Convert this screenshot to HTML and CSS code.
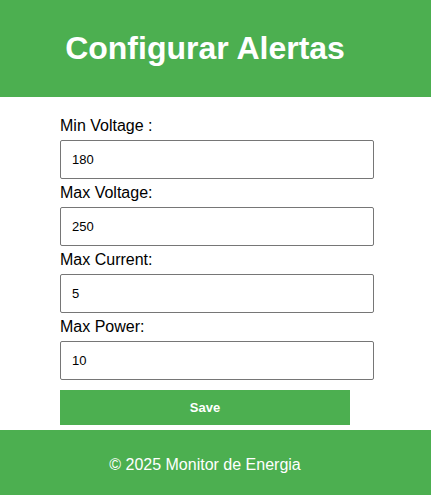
FILE: index.html
```html
<!DOCTYPE html>
<html lang="es">
<head>
<meta charset="utf-8">
<title>Configurar Alertas</title>
<link rel="stylesheet" href="styles.css">
</head>
<body>
<header class="header">
  <h1 class="title">Configurar Alertas</h1>
</header>
<main class="content">
  <form class="form">
    <label class="label" for="minv">Min Voltage :</label>
    <input class="field" id="minv" type="text" value="180">
    <label class="label" for="maxv">Max Voltage:</label>
    <input class="field" id="maxv" type="text" value="250">
    <label class="label" for="maxc">Max Current:</label>
    <input class="field" id="maxc" type="text" value="5">
    <label class="label" for="maxp">Max Power:</label>
    <input class="field" id="maxp" type="text" value="10">
    <button class="save" type="button">Save</button>
  </form>
</main>
<footer class="footer">
  <p class="copy">© 2025 Monitor de Energia</p>
</footer>
</body>
</html>
```
FILE: styles.css
```css
html, body {
  margin: 0;
  padding: 0;
  background: #fff;
  font-family: "Liberation Sans", Arial, sans-serif;
}
.header {
  background: #4CAF50;
  height: 97px;
  display: flex;
  align-items: center;
  justify-content: center;
  padding-right: 21px;
}
.title {
  margin: 0;
  color: #fff;
  font-size: 32px;
  font-weight: bold;
}
.content {
  padding: 20px 0 5px 60px;
}
.form {
  display: flex;
  flex-direction: column;
  align-items: flex-start;
}
.label {
  font-size: 16px;
  line-height: 18px;
  color: #000;
  margin-bottom: 5px;
}
.field {
  box-sizing: border-box;
  width: 314px;
  height: 39px;
  padding: 0 11px;
  border: 1px solid #767676;
  border-radius: 2px;
  font-family: "Liberation Sans", Arial, sans-serif;
  font-size: 13px;
  color: #000;
  margin: 0 0 5px 0;
}
.save {
  margin-top: 5px;
  width: 290px;
  height: 35px;
  border: none;
  background: #4CAF50;
  color: #fff;
  font-family: "Liberation Sans", Arial, sans-serif;
  font-size: 13px;
  font-weight: bold;
}
.footer {
  background: #4CAF50;
  height: 70px;
  display: flex;
  align-items: center;
  justify-content: center;
  padding-right: 21px;
}
.copy {
  margin: 0;
  color: #fff;
  font-size: 16px;
}
```
